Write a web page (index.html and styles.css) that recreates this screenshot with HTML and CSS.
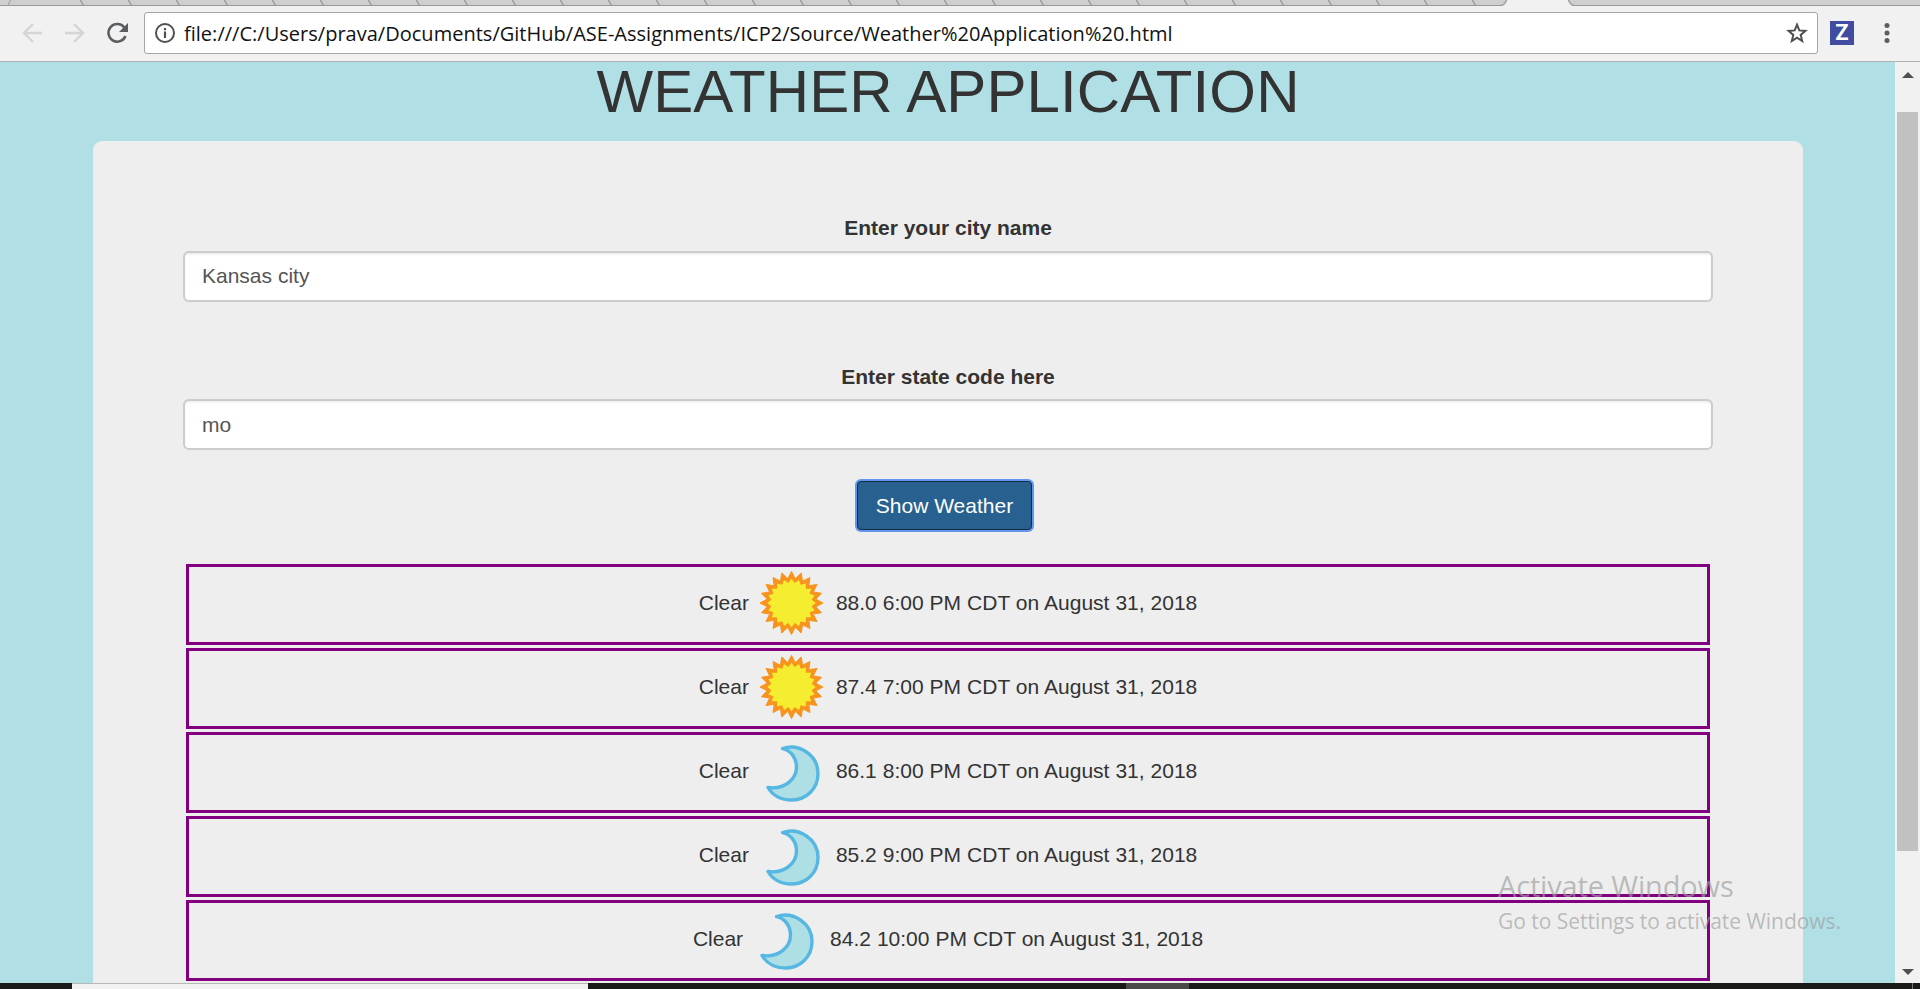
FILE: index.html
```html
<!DOCTYPE html>
<html lang="en">
<head>
<meta charset="utf-8">
<title>Weather Application</title>
<link rel="stylesheet" href="styles.css">
</head>
<body>
<svg class="defs" aria-hidden="true">
  <symbol id="sun" viewBox="-36.5 -36 75 75">
    <path fill="#f7941e" d="M0-31.5L3.8-24.2 9.7-30 11.1-21.8 18.5-25.5 17.3-17.3 25.5-18.5 21.8-11.1 30-9.7 24.2-3.8 31.5 0 24.2 3.8 30 9.7 21.8 11.1 25.5 18.5 17.3 17.3 18.5 25.5 11.1 21.8 9.7 30 3.8 24.2 0 31.5-3.8 24.2-9.7 30-11.1 21.8-18.5 25.5-17.3 17.3-25.5 18.5-21.8 11.1-30 9.7-24.2 3.8-31.5 0-24.2-3.8-30-9.7-21.8-11.1-25.5-18.5-17.3-17.3-18.5-25.5-11.1-21.8-9.7-30-3.8-24.2z" stroke="#f7941e" stroke-width="1"/>
    <path transform="scale(.97)" fill="#f5ee30" d="M0-25L3.3-20.7 7.7-23.8 9.5-18.7 14.7-20.2 14.8-14.8 20.2-14.7 18.7-9.5 23.8-7.7 20.7-3.3 25 0 20.7 3.3 23.8 7.7 18.7 9.5 20.2 14.7 14.8 14.8 14.7 20.2 9.5 18.7 7.7 23.8 3.3 20.7 0 25-3.3 20.7-7.7 23.8-9.5 18.7-14.7 20.2-14.8 14.8-20.2 14.7-18.7 9.5-23.8 7.7-20.7 3.3-25 0-20.7-3.3-23.8-7.7-18.7-9.5-20.2-14.7-14.8-14.8-14.7-20.2-9.5-18.7-7.7-23.8-3.3-20.7z"/>
  </symbol>
  <symbol id="moon" viewBox="0 0 75 75">
    <path fill="#aedfe4" stroke="#56b8e2" stroke-width="3.4" stroke-linejoin="round" d="M27.500 13.600C44 8 63 20 63 38.500C63 54 51 65 37 65C27 65 18 61 13 52.500C30 55 41.500 44 41.500 32C41.500 23 36 15.500 27.500 13.600z"/>
  </symbol>
</svg>
<div class="window">
  <div class="tabs">
    <svg width="1920" height="6" viewBox="0 0 1920 6">
      <defs><pattern id="tab-edges" x="559" width="48" height="6" patternUnits="userSpaceOnUse"><path d="M1-1L3.500 4 5 5.500" fill="none" stroke="#999" stroke-width="1.300"/></pattern></defs>
      <rect width="1920" height="6" fill="#cfcfcf"/>
      <rect x="70" width="1430" height="6" fill="url(#tab-edges)"/>
      <path d="M0 5.500H1504M1570 5.500H1920M8 5L11-1" stroke="#999" fill="none"/>
      <path d="M1502 6Q1505 5 1507-1H1568Q1570 5 1573 6z" fill="#f1f1f1"/>
      <path d="M1501 5.500Q1505 5 1507-1M1568-1Q1570 5 1574 5.500" stroke="#999" fill="none" stroke-width="1.300"/>
    </svg>
  </div>
  <div class="toolbar">
    <svg class="nav" width="124" height="40" viewBox="0 0 124 40" fill="none">
      <path d="M42 20H25M33 11L24 20 33 29M65 20H82M74 11L83 20 74 29" stroke="#d3d5d6" stroke-width="2.400"/>
      <path d="M124.300 14.500A8.800 8.800 0 1 0 125.500 23" stroke="#5a5e61" stroke-width="2.500"/>
      <path d="M128 10V19H119z" fill="#5a5e61"/>
    </svg>
    <div class="address">
      <svg width="22" height="22" viewBox="0 0 22 22"><circle cx="11" cy="11" r="9" fill="none" stroke="#505050" stroke-width="2"/><path d="M11 9.500V16M11 6V8.300" stroke="#505050" stroke-width="2.200"/></svg>
      <span class="url">file:///C:/Users/prava/Documents/GitHub/ASE-Assignments/ICP2/Source/Weather%20Application%20.html</span>
      <svg class="star" width="24" height="24" viewBox="0 0 24 24"><path d="M12 3.700L14.300 9.400 20.400 9.900 15.700 13.900 17.200 20 12 16.700 6.800 20 8.300 13.900 3.600 9.900 9.700 9.400z" fill="none" stroke="#505050" stroke-width="2"/></svg>
    </div>
    <span class="extension">Z</span>
    <svg class="menu" width="8" height="24" viewBox="0 0 8 24" fill="#5a5e61"><circle cx="4" cy="4.500" r="2.500"/><circle cx="4" cy="12" r="2.500"/><circle cx="4" cy="19.500" r="2.500"/></svg>
  </div>
  <div class="viewport">
    <main class="page">
      <h1>WEATHER APPLICATION</h1>
      <section class="panel">
        <label for="city">Enter your city name</label>
        <input id="city" type="text" value="Kansas city">
        <label class="state-label" for="state">Enter state code here</label>
        <input id="state" class="state-input" type="text" value="mo">
        <button type="button">Show Weather</button>
        <div class="forecast">
          <div class="hour">Clear <svg class="icon"><use href="#sun"/></svg> 88.0 6:00 PM CDT on August 31, 2018</div>
          <div class="hour">Clear <svg class="icon"><use href="#sun"/></svg> 87.4 7:00 PM CDT on August 31, 2018</div>
          <div class="hour">Clear <svg class="icon"><use href="#moon"/></svg> 86.1 8:00 PM CDT on August 31, 2018</div>
          <div class="hour">Clear <svg class="icon"><use href="#moon"/></svg> 85.2 9:00 PM CDT on August 31, 2018</div>
          <div class="hour">Clear <svg class="icon"><use href="#moon"/></svg> 84.2 10:00 PM CDT on August 31, 2018</div>
        </div>
      </section>
    </main>
    <div class="scrollbar">
      <svg width="12" height="6" viewBox="0 0 12 6"><path d="M6 0L12 6H0z" fill="#505050"/></svg>
      <div class="thumb"></div>
      <svg class="down" width="12" height="6" viewBox="0 0 12 6"><path d="M0 0H12L6 6z" fill="#505050"/></svg>
    </div>
  </div>
  <div class="taskbar"><div class="search"></div><div class="task"></div><div class="peek"></div></div>
</div>
<div class="watermark"><p class="wm-title">Activate Windows</p><p class="wm-text">Go to Settings to activate Windows.</p></div>
</body>
</html>
```

FILE: styles.css
```css
* { box-sizing: border-box; }
body { margin: 0; overflow: hidden; font-family: "Liberation Sans", Arial, sans-serif; font-size: 21px; color: #333; }
svg { display: block; flex: none; }
.defs { position: absolute; width: 0; height: 0; }
.window { display: flex; flex-direction: column; height: 989px; }
.tabs { height: 6px; flex: none; }
.toolbar { display: flex; align-items: center; height: 56px; flex: none; padding-bottom: 1px; background: #f1f1f1; border-bottom: 1px solid #b1b1b1; }
.nav { overflow: visible; margin-right: 20px; }
.address { display: flex; align-items: center; width: 1674px; height: 42px; background: #fff; border: 1px solid #a6a6a6; border-radius: 3px; padding: 0 8px 0 9px; }
.url { margin-left: 8px; font: 20px "Open Sans", "Noto Sans", sans-serif; letter-spacing: 0.015px; color: #111; white-space: nowrap; }
.star { margin-left: auto; }
.extension { display: flex; align-items: center; justify-content: center; width: 24px; height: 24px; margin-left: 12px; background: #3f4c9f; color: #fff; font: bold 22px/24px Roboto, sans-serif; }
.menu { margin-left: 29px; }
.viewport { display: flex; flex: 1; min-height: 0; }
.page { width: 1895px; background: #b0e0e6; padding: 0 92px 0 93px; }
h1 { margin: 0; height: 79px; font-size: 60px; font-weight: 500; line-height: 60px; letter-spacing: 0.1px; text-align: center; }
.panel { display: flex; flex-direction: column; align-items: center; height: 842px; padding: 72px 90px 0; background: #eee; border-radius: 9px 9px 0 0; }
label { font-weight: bold; line-height: 30px; margin-bottom: 8px; }
input { flex: none; width: 1530px; height: 51px; border: 2px solid #ccc; border-radius: 6px; padding: 0 17px 1px; background: #fff; box-shadow: inset 0 1.500px 1.500px rgba(0,0,0,.075); color: #555; font: inherit; }
.state-label { margin-top: 60px; }
.state-input { margin-top: -1px; padding-bottom: 0; }
button { flex: none; width: 175px; height: 49px; margin: 31px 7px 0 0; padding: 0; background: #286090; color: #fff; border: 1px solid #122b40; border-radius: 4px; box-shadow: 0 0 0 2px #6197ee; font: inherit; }
.forecast { display: grid; gap: 3px; width: 1524px; margin-top: 34px; }
.hour { height: 81px; border: 3px solid #800080; text-align: center; white-space: nowrap; line-height: 30px; word-spacing: 0.15px; }
.icon { display: inline-block; width: 75px; height: 75px; vertical-align: middle; }
.scrollbar { display: flex; flex-direction: column; align-items: center; width: 25px; padding: 10px 0 8px; background: #f1f1f1; }
.thumb { width: 21px; height: 739px; margin-top: 34px; background: #c1c1c1; }
.down { margin-top: auto; }
.taskbar { display: flex; height: 6px; flex: none; padding-left: 72px; background: #191917; }
.search { width: 516px; background: #f2f2f2; border-top: 1px solid #b5b9b5; }
.task { width: 63px; margin-left: 538px; background: #4a4a48; }
.peek { width: 1px; margin-left: auto; margin-right: 7px; background: #777; }
.watermark { position: absolute; left: 1498px; top: 866px; color: rgba(158,158,158,.66); font-family: "Open Sans", "Noto Sans", sans-serif; white-space: nowrap; }
.watermark p { margin: 0; }
.wm-title { font-size: 29px; line-height: 40px; letter-spacing: -0.15px; }
.wm-text { font-size: 21px; line-height: 30px; letter-spacing: -0.03px; }
```
